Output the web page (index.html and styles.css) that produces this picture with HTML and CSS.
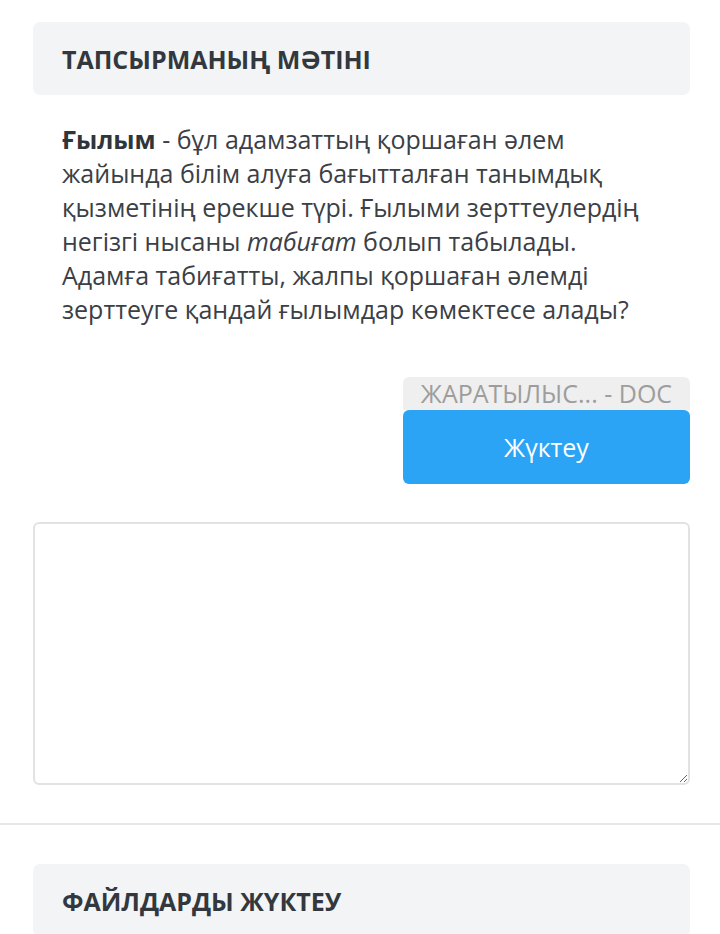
FILE: index.html
```html
<!DOCTYPE html>
<html>
<head>
<meta charset="utf-8">
<title>Тапсырма</title>
<link rel="stylesheet" href="styles.css">
</head>
<body>
<div class="page">
  <div class="panel-head">ТАПСЫРМАНЫҢ МӘТІНІ</div>

  <p class="task-text"><b>Ғылым</b> - бұл адамзаттың қоршаған әлем жайында білім алуға бағытталған танымдық қызметінің ерекше түрі. Ғылыми зерттеулердің негізгі нысаны <i>табиғат</i> болып табылады. Адамға табиғатты, жалпы қоршаған әлемді зерттеуге қандай ғылымдар көмектесе алады?</p>

  <div class="file-box">
    <div class="file-name">ЖАРАТЫЛЫС... - DOC</div>
    <button class="btn-load">Жүктеу</button>
  </div>

  <textarea class="answer"></textarea>
</div>

<hr class="divider">

<div class="page">
  <div class="panel-head">ФАЙЛДАРДЫ ЖҮКТЕУ</div>
</div>
</body>
</html>
```

FILE: styles.css
```css
body {
  margin: 0;
  font-family: "Open Sans", "Noto Sans", sans-serif;
  color: #3b4046;
  background: #fff;
}

.page {
  padding: 0 30px 0 33px;
}

.panel-head {
  margin-top: 22px;
  height: 73px;
  box-sizing: border-box;
  padding: 0 29px;
  display: flex;
  align-items: center;
  background: #f2f4f6;
  border-radius: 7px;
  font-size: 25px;
  font-weight: 700;
  color: #33383e;
}

.task-text {
  margin: 27px 0 0;
  padding: 0 38px 0 29px;
  font-size: 25px;
  line-height: 34px;
  color: #3b4046;
}

.task-text b {
  color: #30353b;
}

.file-box {
  margin: 51px 0 0 auto;
  width: 287px;
  display: flex;
  flex-direction: column;
}

.file-name {
  height: 33px;
  background: #efefef;
  border-radius: 6px 6px 0 0;
  color: #9d9d9d;
  font-size: 25px;
  line-height: 33px;
  text-align: center;
  white-space: nowrap;
}

.btn-load {
  height: 74px;
  border: none;
  border-radius: 6px;
  background: #2ba4f6;
  color: #fff;
  font-family: inherit;
  font-size: 25px;
}

.answer {
  display: block;
  margin-top: 38px;
  width: 100%;
  height: 263px;
  box-sizing: border-box;
  border: 2px solid #e2e2e2;
  border-radius: 6px;
  background: #fff;
}

.divider {
  margin: 38px 0 0;
  border: none;
  border-top: 2px solid #e8e8e8;
}

.divider + .page .panel-head {
  margin-top: 39px;
}
```
